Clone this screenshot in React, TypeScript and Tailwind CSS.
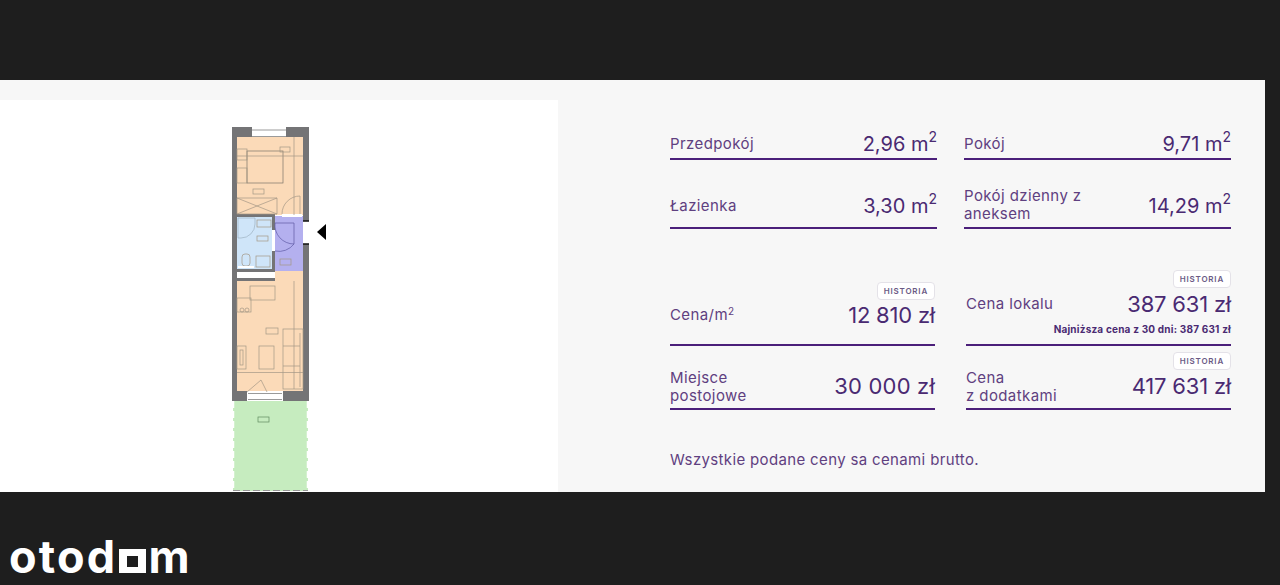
const font = { fontFamily: 'Inter, "Noto Sans", sans-serif' }

const labelClass = 'text-[15px] leading-[18px] tracking-[0.4px] text-[#5f4080]'
const priceClass = 'text-[22px] leading-[26px] tracking-[-0.2px] text-[#4a2a72]'

function Area({ label, value, className, labelClass: lc, valueClass }: {
  label: React.ReactNode
  value: string
  className: string
  labelClass: string
  valueClass: string
}) {
  return (
    <div className={`flex items-end justify-between border-b-2 border-[#4b1f7a] ${className}`}>
      <span className={`${labelClass} ${lc}`}>{label}</span>
      <span className={`text-[20px] leading-[26px] text-[#4a2a72] ${valueClass}`}>
        {value} m<sup className="-top-[9px] align-baseline text-[14px]">2</sup>
      </span>
    </div>
  )
}

function History() {
  return (
    <span className="rounded-[4px] border border-[#e4e2e8] bg-white px-[6px] text-[8px] leading-[16px] font-semibold tracking-[0.8px] text-[#6b5a85]">
      HISTORIA
    </span>
  )
}

function FloorPlan() {
  const line = '#a39785'
  return (
    <svg viewBox="0 100 558 392" className="block h-[392px] w-[558px]">
      <rect x="237" y="137" width="66" height="78" fill="#fbdab8" />
      <rect x="237" y="277" width="66" height="114" fill="#fbdab8" />
      <rect x="275" y="271" width="28" height="10" fill="#fbdab8" />
      <rect x="237" y="217" width="36" height="53" fill="#cfe5f9" />
      <rect x="273" y="216" width="30" height="55" fill="#b4b0ef" />
      <rect x="233" y="401" width="75" height="90" fill="#c6ecbf" />

      {/* walls */}
      <g fill="#747476">
        <rect x="232" y="127" width="20" height="10" />
        <rect x="286" y="127" width="23" height="10" />
        <rect x="232" y="137" width="5" height="254" />
        <rect x="303" y="137" width="6" height="84" />
        <rect x="303" y="244" width="6" height="147" />
        <rect x="237" y="214" width="38" height="3" />
        <rect x="272" y="217" width="3" height="13" />
        <rect x="272" y="251" width="3" height="20" />
        <rect x="237" y="269" width="38" height="3" />
        <rect x="237" y="278" width="38" height="3" />
        <rect x="232" y="391" width="15" height="10" />
        <rect x="283" y="391" width="26" height="10" />
      </g>
      <rect x="237" y="272" width="38" height="6" fill="#fff" />
      <rect x="303" y="221" width="6" height="23" fill="#fff" />
      <rect x="272" y="230" width="3" height="21" fill="#fff" />
      <rect x="282" y="214" width="20" height="3" fill="#fff" />
      <path d="M303 221h6M303 244h6" stroke="#111" strokeWidth="1.5" />

      {/* windows */}
      <path d="M252 130h34M252 136.500h34" stroke="#9a9a9a" strokeWidth="1" />
      <rect x="247" y="392" width="36" height="8" fill="#fff" />
      <path d="M248 393.500h34M248 399.500h34" stroke="#9a9a9a" strokeWidth="1" />

      <g fill="none" stroke={line} strokeWidth="0.7">
        {/* bed and bedroom */}
        <rect x="247" y="151" width="36" height="32" stroke="#7d7468" />
        <rect x="237" y="149" width="10" height="11" />
        <rect x="237" y="168" width="10" height="15" />
        <rect x="280" y="147" width="10" height="5" />
        <rect x="253" y="189" width="11" height="5" />
        <path d="M237 156h66M294 137v78M237 198h40v16h-40zM237 198l40 16M277 198l-40 16" />
        <path d="M282 214a18 18 0 0 1 18-18v18" />
        {/* bathroom */}
        <path d="M238 218h17v6a14 14 0 0 1-14 14h-3z" stroke="#9db1c2" />
        <rect x="257" y="220" width="14" height="7" />
        <rect x="257" y="236" width="11" height="5" />
        <rect x="242" y="254" width="8" height="12" rx="3" />
        <rect x="256" y="256" width="14" height="11" />
        <path d="M238 267h16" stroke="#fff" strokeWidth="2" />
        {/* hall */}
        <rect x="280" y="259" width="11" height="6" />
        <path d="M275 223h19v21a19 19 0 0 1-19-21z" stroke="#5f5aa5" />
        <path d="M275 251a19 19 0 0 0 19-7" stroke="#5f5aa5" />
        {/* living room */}
        <rect x="250" y="286" width="25" height="14" />
        <rect x="237" y="298" width="14" height="14" />
        <circle cx="242" cy="310" r="2" />
        <circle cx="247" cy="310" r="2" />
        <rect x="266" y="328" width="12" height="6" />
        <rect x="259" y="346" width="15" height="23" />
        <rect x="237" y="346" width="9" height="23" />
        <rect x="240" y="350" width="3" height="15" />
        <rect x="283" y="329" width="20" height="60" />
        <path d="M283 346h17M283 366h17M300 333v54M237 372.500h66M294 281v108" />
        <path d="M247 392l14-12 6 12" />
      </g>
      <rect x="258" y="417" width="11" height="5" fill="none" stroke="#5f8a5f" strokeWidth="0.7" />
      <path d="M233.500 401v90M307.500 401v90" stroke="#fff" strokeWidth="1.500" strokeDasharray="7 3" />
      <path d="M233 490.500h75" stroke="#999" strokeWidth="1" strokeDasharray="7 3" />

      {/* entrance marker */}
      <path d="M317 232l9-8v16z" fill="#000" />
    </svg>
  )
}

export default function App() {
  return (
    <div className="flex h-[585px] w-[1280px] flex-col overflow-hidden bg-[#1e1e1e]" style={font}>
      <div className="h-[80px]" />
      <div className="flex h-[412px] w-[1265px] bg-[#f7f7f7] pt-[20px]">
        <div className="h-[392px] w-[558px] bg-white">
          <FloorPlan />
        </div>

        <div className="w-[707px] pl-[112px] pr-[34px] pt-[28px]">
          <div className="grid grid-cols-[267px_267px] gap-x-[27px] gap-y-[24px]">
            <Area label="Przedpokój" value="2,96" className="h-[32px]" labelClass="mb-[5px]" valueClass="mb-[1px]" />
            <Area label="Pokój" value="9,71" className="h-[32px]" labelClass="mb-[5px]" valueClass="mb-[1px]" />
            <Area label="Łazienka" value="3,30" className="h-[45px]" labelClass="mb-[12px]" valueClass="mb-[8px]" />
            <Area label={<>Pokój dzienny z<br />aneksem</>} value="14,29" className="h-[45px]" labelClass="mb-[4px]" valueClass="mb-[8px]" />
          </div>

          <div className="mt-[41px] grid grid-cols-[265px_265px] gap-x-[31px] gap-y-[6px]">
            <div className="h-[76px] border-b-2 border-[#4b1f7a]">
              <div className="mt-[12px] flex justify-end"><History /></div>
              <div className="mt-[2px] flex items-center justify-between">
                <span className={labelClass}>
                  Cena/m<sup className="text-[10px]">2</sup>
                </span>
                <span className={priceClass}>12 810 zł</span>
              </div>
            </div>
            <div className="h-[76px] border-b-2 border-[#4b1f7a]">
              <div className="flex justify-end"><History /></div>
              <div className="mt-[3px] flex items-center justify-between">
                <span className={labelClass}>Cena lokalu</span>
                <span className={priceClass}>387 631 zł</span>
              </div>
              <div className="mt-[5px] text-right text-[10px] leading-[14px] font-bold tracking-[0.2px] text-[#4a2a72]">
                Najniższa cena z 30 dni: 387 631 zł
              </div>
            </div>
            <div className="flex h-[58px] items-end justify-between border-b-2 border-[#4b1f7a]">
              <span className={`mb-[3px] ${labelClass}`}>Miejsce<br />postojowe</span>
              <span className={`mb-[9px] ${priceClass} tracking-[0.2px]`}>30 000 zł</span>
            </div>
            <div className="h-[58px] border-b-2 border-[#4b1f7a]">
              <div className="flex justify-end"><History /></div>
              <div className="-mt-[1px] flex items-end justify-between">
                <span className={labelClass}>Cena<br />z dodatkami</span>
                <span className={`mb-[6px] ${priceClass}`}>417 631 zł</span>
              </div>
            </div>
          </div>

          <p className="mt-[40px] text-[15px] leading-[20px] tracking-[0.35px] text-[#5f4080]">
            Wszystkie podane ceny sa cenami brutto.
          </p>
        </div>
      </div>

      <div className="flex flex-1 items-end pb-[3px] pl-[9px] text-white">
        <span className="text-[45px] leading-[50px] font-bold tracking-[2.2px]">otod</span>
        <span className="mb-[9px] ml-[2px] flex h-[24px] w-[27px] items-center justify-center bg-white">
          <span className="h-[11px] w-[11px] bg-[#1e1e1e]" />
        </span>
        <span className="ml-[2px] text-[45px] leading-[50px] font-bold">m</span>
      </div>
    </div>
  )
}
